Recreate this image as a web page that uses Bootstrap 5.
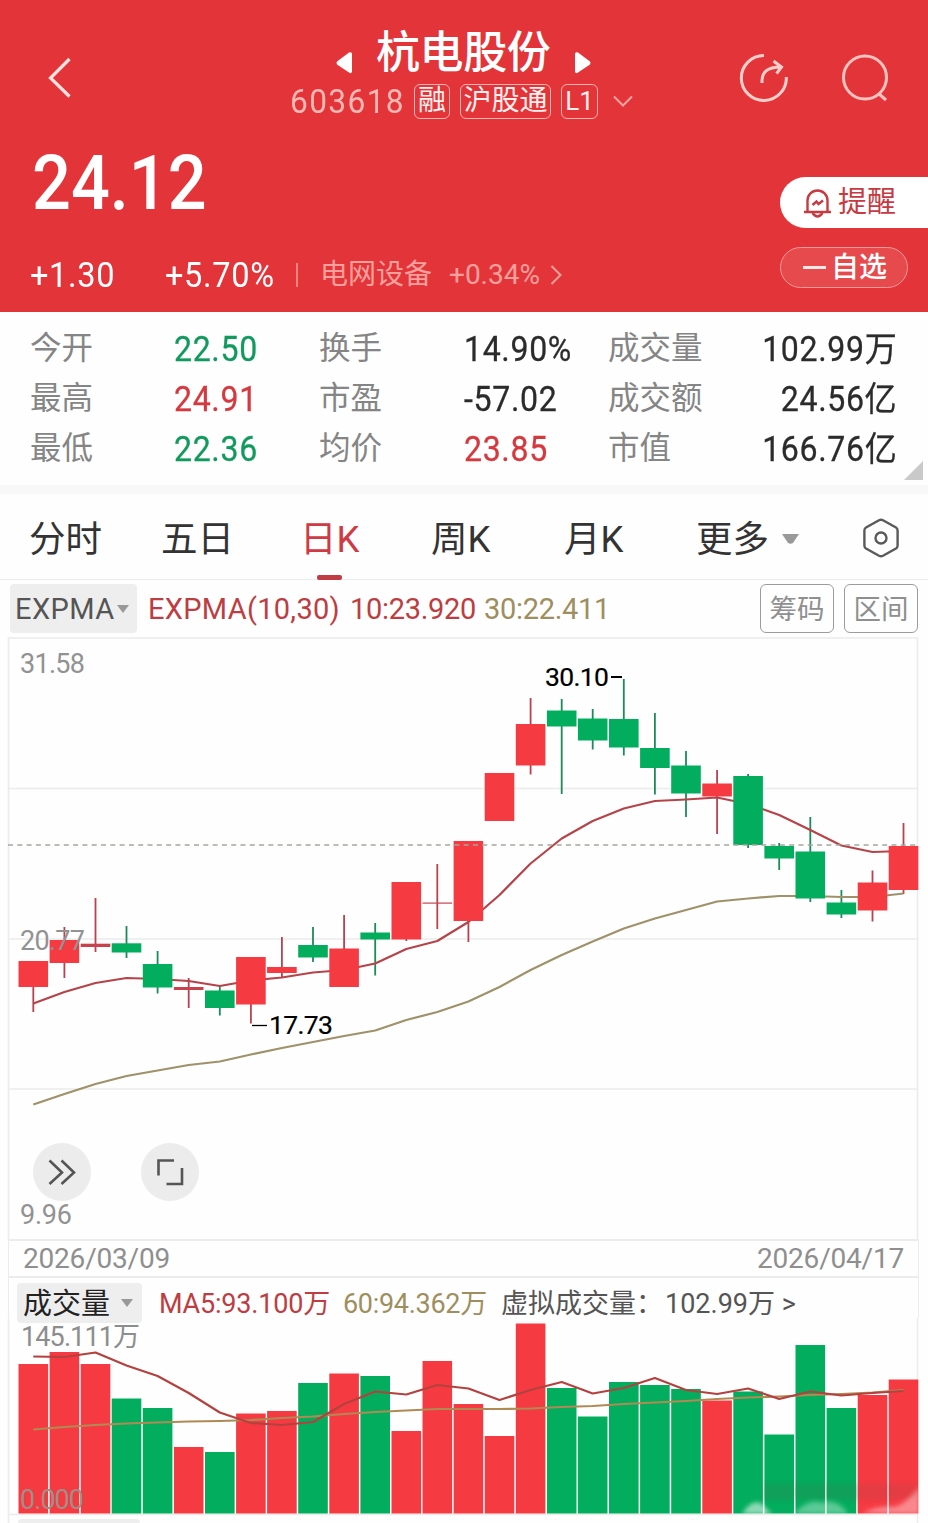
<!DOCTYPE html>
<html lang="zh-CN">
<head>
<meta charset="utf-8">
<meta name="viewport" content="width=device-width, initial-scale=1">
<title>杭电股份 603618</title>
<link href="https://cdn.jsdelivr.net/npm/bootstrap@5.3.0/dist/css/bootstrap.min.css" rel="stylesheet">
<style>
  body{font-family:Roboto,"Noto Sans CJK SC",sans-serif;background:#fefefe;color:#2b2b2b;width:928px;height:1523px;overflow:hidden;line-height:1}
  svg{display:block;flex:none}
  .t{white-space:nowrap;line-height:1;display:block}
  .hero{height:312px;background:#e33539;color:#fff}
  .hero-top{height:136px}
  .back{margin:56px 0 0 46px;width:229px}
  .ident{width:378px;padding-top:30px}
  .stock-name{font-size:44px;font-weight:500;line-height:44px;letter-spacing:-.4px}
  .ident-row{height:34px;margin-top:9px}
  .code-no{font-size:34px;width:124px;color:#fcb9b4;margin-left:15px}
  .code-no span,.price,.chg span,.val{display:inline-block;transform:scaleX(.93);transform-origin:0 50%}
  .code-no span{letter-spacing:1.5px}
  .tagbox{height:35px;border:1.5px solid #fbb3ae;border-radius:6px;font-size:28px;color:#fff0ee}
  .price{font-size:76px;font-weight:500;letter-spacing:0;margin-left:32px;height:76px;line-height:76px;transform:scaleX(.9)}
  .chg{font-size:35px}
  .chg span{letter-spacing:.7px}
  .sector{font-size:28px;color:#f9a09d}
  .remind{width:148px;height:51px;background:#fff;border-radius:26px 0 0 26px;color:#c63b41;font-size:29px;padding-left:24px}
  .watch{width:128px;height:41px;border:1.5px solid #f4999a;border-radius:21px;background:#e64a4d;font-size:28px;font-weight:500;padding-left:22px;margin-top:19px}
  .stats{height:173px;padding-top:12px}
  .stat-line{height:50px}
  .lab{font-size:31.5px;color:#858585}
  .val{font-size:34.5px;letter-spacing:.7px;-webkit-text-stroke:.3px currentColor}
  .val.ms-auto{transform-origin:100% 50%;margin-right:31px}
  .up{color:#d5393f}.dn{color:#129a5e}
  .band{height:9px;background:#f8f8f8}
  .tabs{height:86px;padding-top:3px;border-bottom:1.5px solid #ececec;font-size:36.5px;color:#333}
  .tabs .t{padding-top:4px}
  .tabs .on{color:#cf3a45}
  .on-bar{left:17px;bottom:-1px;width:25px;height:5px;border-radius:2px;background:#c23c46}
  .ind{height:57px;padding:4px 0 0 10px;font-size:29px}
  .ind .t{padding-top:2px}
  .chip{background:#eeeeef;border-radius:4px;color:#555}
  .obtn{width:74px;height:49px;border:1.5px solid #9c9c9c;border-radius:6px;color:#8f8f8f;font-size:27.5px;padding-top:2px}
  .ma-a{color:#bd3d42}.ma-b{color:#9f8e5e}
  .dates{height:39px;margin:0 9px 0 8px;border:solid #ececec;border-width:2px 1px;font-size:28px;color:#8f8f8f;padding:0 14px 0 14px;letter-spacing:-.2px}
  .volhead{height:40px;margin:0 9px 0 8px;border:solid #ececec;border-width:0 1px;font-size:27px}
  svg text{font-family:Roboto,"Noto Sans CJK SC",sans-serif}
</style>
</head>
<body>

<header class="hero">
  <div class="hero-top d-flex align-items-start">
    <svg class="back" height="44" viewBox="0 0 229 44" fill="none" stroke="#ffe3df" stroke-width="3.2"><path d="M23.500 3L4.500 22L23.500 40.500"/></svg>
    <div class="ident">
      <div class="d-flex align-items-center justify-content-start" style="padding-left:61px">
        <svg width="16" height="26" viewBox="0 0 16 26" class="mt-3" fill="#fff"><path d="M16 1.500V20Q15 22 13 20.500L1 12.500Q0 11 1 9.500L13 .5Q15 -.5 16 1.500Z" transform="translate(0 4)"/></svg>
        <span class="t stock-name" style="margin:0 25px 0 24px;padding-top:1px">杭电股份</span>
        <svg width="16" height="26" viewBox="0 0 16 26" class="mt-3" fill="#fff"><path d="M0 1.500V20Q1 22 3 20.500L15 12.500Q16 11 15 9.500L3 .5Q1 -.5 0 1.500Z" transform="translate(0 4)"/></svg>
      </div>
      <div class="ident-row d-flex align-items-center">
        <span class="t code-no"><span>603618</span></span>
        <span class="tagbox d-flex align-items-center justify-content-center" style="width:36px">融</span>
        <span class="tagbox d-flex align-items-center justify-content-center" style="width:91px;margin-left:10px">沪股通</span>
        <span class="tagbox d-flex align-items-center justify-content-center" style="width:37px;margin-left:10px;font-size:26px">L1</span>
        <svg width="20" height="12" viewBox="0 0 20 12" style="margin-left:15px" fill="none" stroke="#f5a5a2" stroke-width="2"><path d="M1 1.500L10 10.500L19 1.500"/></svg>
      </div>
    </div>
    <svg width="50" height="50" viewBox="0 0 50 50" style="margin:53px 0 0 85px" fill="none" stroke="#ffd0cb" stroke-width="3"><path d="M26 2.500A22.500 22.500 0 1 0 48.300 24"/><path d="M24 30C23.500 19 29 14 43 14M35.500 8L43.500 14L38.500 20.500"/></svg>
    <svg width="50" height="50" viewBox="0 0 50 50" style="margin:53px 0 0 51px" fill="none" stroke="#ffc3bf" stroke-width="3"><circle cx="26" cy="24.500" r="21.500"/><path d="M39.500 40.500L47 47"/></svg>
  </div>
  <div class="d-flex justify-content-between">
    <div>
      <div class="price t" style="margin-top:9px">24.12</div>
      <div class="d-flex align-items-center" style="height:40px;margin-top:34px">
        <span class="t chg" style="width:135px;margin-left:30px"><span>+1.30</span></span>
        <span class="t chg" style="width:131px"><span>+5.70%</span></span>
        <span style="width:2px;height:24px;background:#ee8283"></span>
        <span class="t sector" style="margin-left:22px;width:129px">电网设备</span>
        <span class="t sector" style="width:101px">+0.34%</span>
        <svg width="12" height="20" viewBox="0 0 12 20" fill="none" stroke="#f9a09d" stroke-width="2"><path d="M1.500 1L10.500 10L1.500 19"/></svg>
      </div>
    </div>
    <div class="d-flex flex-column" style="padding-top:41px">
      <div class="remind d-flex align-items-center">
        <svg width="28" height="30" viewBox="0 0 28 30" style="margin-right:6px" fill="none" stroke="#c63b41" stroke-width="2.400"><path d="M0 24H27M3.500 24V12.500A10 10 0 0 1 23.500 12.500V24"/><path d="M8.500 25Q13.500 32 18.500 25"/><path d="M8.500 17L12.500 13.500L14.500 16L19 12.500"/></svg>
        <span class="t">提醒</span>
      </div>
      <div class="watch d-flex align-items-center">
        <span style="width:23px;height:3px;background:#ffe9e6;margin-right:5px"></span><span class="t">自选</span>
      </div>
    </div>
  </div>
</header>

<section class="stats position-relative">
  <div class="stat-line d-flex align-items-center">
    <span class="t lab" style="margin-left:30px;width:144px">今开</span><span class="t val dn" style="width:145px">22.50</span>
    <span class="t lab" style="width:145px">换手</span><span class="t val" style="width:144px">14.90%</span>
    <span class="t lab">成交量</span><span class="t val ms-auto">102.99万</span>
  </div>
  <div class="stat-line d-flex align-items-center">
    <span class="t lab" style="margin-left:30px;width:144px">最高</span><span class="t val up" style="width:145px">24.91</span>
    <span class="t lab" style="width:145px">市盈</span><span class="t val" style="width:144px">-57.02</span>
    <span class="t lab">成交额</span><span class="t val ms-auto">24.56亿</span>
  </div>
  <div class="stat-line d-flex align-items-center">
    <span class="t lab" style="margin-left:30px;width:144px">最低</span><span class="t val dn" style="width:145px">22.36</span>
    <span class="t lab" style="width:145px">均价</span><span class="t val up" style="width:144px">23.85</span>
    <span class="t lab">市值</span><span class="t val ms-auto">166.76亿</span>
  </div>
  <svg class="position-absolute" style="right:5px;bottom:5px" width="19" height="19"><path d="M19 0V19H0Z" fill="#c9c9c9"/></svg>
</section>
<div class="band"></div>

<nav class="tabs d-flex align-items-center">
  <span class="t" style="margin-left:29px;width:132px">分时</span>
  <span class="t" style="width:139px">五日</span>
  <span class="on position-relative d-flex align-items-center h-100" style="width:131px"><span class="t">日K</span><span class="on-bar position-absolute"></span></span>
  <span class="t" style="width:133px">周K</span>
  <span class="t" style="width:132px">月K</span>
  <span class="t" style="width:86px">更多</span>
  <svg width="18" height="11"><path d="M0 1H17L11 10Q8.500 11.500 6 10Z" fill="#999"/></svg>
  <svg width="38" height="40" viewBox="0 0 38 40" style="margin-left:62px" fill="none" stroke="#5a5a5a" stroke-width="2.400"><path d="M17 2.200Q19 1.200 21 2.200L34 9.500Q35.600 10.500 35.600 12.500V27.500Q35.600 29.500 34 30.500L21 37.800Q19 38.800 17 37.800L4 30.500Q2.400 29.500 2.400 27.500V12.500Q2.400 10.500 4 9.500Z"/><circle cx="19" cy="20" r="5.500"/></svg>
</nav>

<div class="ind d-flex align-items-start">
  <div class="chip d-flex align-items-center" style="width:127px;height:49px;padding-left:5px"><span class="t" style="letter-spacing:.4px">EXPMA</span><svg width="12" height="8" style="margin-left:3px"><path d="M0 0H12L6 8Z" fill="#999"/></svg></div>
  <div class="d-flex align-items-center" style="height:49px;margin-left:11px">
    <span class="t ma-a" style="width:202px;letter-spacing:.3px">EXPMA(10,30)</span>
    <span class="t ma-a" style="width:134px;letter-spacing:-.3px">10:23.920</span>
    <span class="t ma-b" style="letter-spacing:-.3px">30:22.411</span>
  </div>
  <div class="d-flex ms-auto" style="gap:10px;margin-right:10px">
    <span class="obtn d-flex align-items-center justify-content-center">筹码</span>
    <span class="obtn d-flex align-items-center justify-content-center">区间</span>
  </div>
</div>

<svg id="kline" width="928" height="602" viewBox="0 637 928 602">
  <g fill="none" stroke="#ececec" stroke-width="1.600"><path d="M8.500 1239V638H917.500V1239"/><path d="M8 788.500H918M8 939H918M8 1089H918"/></g>
  <g id="wicks"></g>
  <g id="klines" fill="none" stroke-width="2.200" stroke-linejoin="round"></g>
  <g id="bodies"></g>
  <path d="M8 845H918" stroke="#a3a89c" stroke-width="1.500" stroke-dasharray="5 4.300"/>
  <g font-size="27" fill="#929292"><text x="20" y="672.500" textLength="65">31.58</text><text x="20" y="950" textLength="65">20.77</text><text x="20" y="1224" textLength="52">9.96</text></g>
  <g font-size="26.500" fill="#000" stroke="#000" stroke-width=".2"><text x="545" y="685.500" textLength="64">30.10</text><text x="269" y="1034" textLength="64">17.73</text></g>
  <path d="M611 677H622" stroke="#000" stroke-width="2"/><path d="M252 1025.500H267" stroke="#000" stroke-width="1.300"/>
  <circle cx="62" cy="1172" r="29" fill="#ececec"/><circle cx="170" cy="1172" r="29" fill="#ececec"/>
  <g fill="none" stroke="#555" stroke-width="2.600"><path d="M49.500 1160.500L62 1172.500L49.500 1184M61.500 1160.500L74 1172.500L61.500 1184"/><path d="M174 1160.500H158.500V1175.500M166.500 1184H182V1168"/></g>
</svg>

<div class="dates d-flex align-items-center justify-content-between">
  <span class="t">2026/03/09</span><span class="t">2026/04/17</span>
</div>
<div class="volhead d-flex align-items-start">
  <div class="chip d-flex align-items-center" style="width:125px;height:40px;margin:5px 0 0 8px;padding-left:6px"><span class="t" style="font-size:29px;color:#222;padding-top:2px">成交量</span><svg width="12" height="8" style="margin-left:11px"><path d="M0 0H12L6 8Z" fill="#999"/></svg></div>
  <div class="d-flex align-items-center" style="height:53px;margin-left:17px">
    <span class="t ma-a" style="width:184px;letter-spacing:-.2px">MA5:93.100万</span>
    <span class="t ma-b" style="width:158px;letter-spacing:-.3px">60:94.362万</span>
    <span class="t" style="width:164px;color:#555">虚拟成交量：</span>
    <span class="t" style="color:#555">102.99万 &gt;</span>
  </div>
</div>
<svg id="vol" class="position-relative" width="928" height="205" viewBox="0 1318 928 205">
  <defs>
    <filter id="soft" x="-10%" y="-50%" width="120%" height="200%"><feGaussianBlur stdDeviation="2"/></filter>
    <clipPath id="area"><rect x="740" y="1470" width="178" height="44"/></clipPath>
  </defs>
  <path d="M8.500 1318V1523M917.500 1318V1523M8 1514.500H918" stroke="#ececec" stroke-width="1.500"/>
  <g id="bars"></g>
  <g id="vlines" fill="none" stroke-width="2.200" stroke-linejoin="round"></g>
  <g clip-path="url(#area)"><g filter="url(#soft)" fill="#fff">
    <path d="M764 1484H918V1500H764Z" fill="#6b4a3a" opacity=".13"/>
    <path d="M742 1514Q752 1498 762 1504L772 1514Z" opacity=".55"/>
    <path d="M794 1514Q808 1498 822 1503Q838 1498 848 1514Z" opacity=".35"/>
    <path d="M862 1513Q880 1505 894 1507Q906 1504 919 1488V1514Z" opacity=".4"/>
  </g></g>
  <g font-size="27" fill="#8d8d8d"><text x="21" y="1345.500" textLength="119">145.111万</text><text x="20" y="1509" textLength="64" fill="#a08d88">0.000</text></g>
  <rect x="18" y="1519" width="122" height="10" rx="4" fill="#eeeeef"/>
</svg>

<script src="https://cdn.jsdelivr.net/npm/bootstrap@5.3.0/dist/js/bootstrap.bundle.min.js"></script>
<script>
  // one row per trading day: body top, body bottom, high, low, rising (1) or falling (0), volume top
  const days = [
    [961,987,961,1012,1,1364],[940,963,927,978,1,1352],[943.7,947,898,952,1,1364],[943.3,952.5,926,958,0,1398.5],
    [964,987.5,951,993.5,0,1408],[987,990,978,1008,1,1447],[990.5,1008,986,1015.5,0,1452],[957,1004.5,957,1023.5,1,1413.5],
    [967,973,937,978,1,1411],[945,957.5,927,962,0,1383],[948.5,987,915,987,1,1373.5],[932.5,939.5,923,975.5,0,1376],
    [882,939.5,882,941,1,1431],[902.5,903.7,864,929,1,1361],[841,921,841,942,1,1404],[773,821,773,821,1,1436],
    [724,765.5,698,774.5,1,1323.5],[710.5,726.5,699,794,0,1388],[718.5,740.5,709,749.5,0,1416.5],[719,747.5,679,755.5,0,1382],
    [748,768,713,794.5,0,1385],[765.5,793.5,751,817,0,1389],[783.5,796.5,770,834,1,1400.5],[776,845,774,848,0,1391.5],
    [846,858.5,843,870,0,1434.5],[851.5,898.5,817,902,0,1345],[902.5,914.5,890,918,0,1408],[882.5,910.5,870.5,921.5,1,1395],
    [846,890,823,894,1,1379.5]];
  const fast = [1003.5,992,983,978,979,981,986,980.5,977.5,972.5,970,963.5,949,941,922,895,863.5,838.5,821,808.5,801,799.5,797.5,804,815,830,845.5,852,851];
  const slow = [1104.5,1094,1084,1076,1070.5,1065,1061.5,1054.5,1048,1042,1036,1030.5,1020,1012,1001.5,987,970,955,941.5,928.5,918.5,910,901.5,898.5,896,896,897,897,893.5];
  const ma5 = [1356.5,1357,1352.5,1365.5,1376,1393,1412.5,1423,1425,1422,1404,1391.5,1394.5,1385,1388.5,1400,1390,1382,1393.5,1388,1378,1390,1394,1388.5,1399,1391.5,1395.5,1393,1391];
  const ma60 = [1429.5,1427,1425,1423.5,1422.5,1421.5,1421,1420,1418,1416.5,1414,1412,1410.5,1409,1409,1409,1408.5,1407,1406,1404,1402.5,1401,1399,1397.5,1396.5,1395,1394,1392.5,1390];
  const RED = '#f63a42', GREEN = '#02ad5d', X = i => 33.3 + 31.08 * i;
  const rect = (x, y, w, h, c) => `<rect x="${x.toFixed(1)}" y="${y}" width="${w}" height="${h}" fill="${c}"/>`;
  const line = (a, c) => `<polyline stroke="${c}" points="${a.map((y, i) => X(i).toFixed(1) + ',' + y).join(' ')}"/>`;
  const put = (id, html) => document.getElementById(id).innerHTML = html;
  put('wicks', days.map((d, i) => rect(X(i) - .9, d[2], 1.8, d[3] - d[2], d[4] ? '#b9424e' : '#1d8a5a')).join(''));
  put('bodies', days.map((d, i) => rect(X(i) - 14.8, d[0], 29.6, +(d[1] - d[0]).toFixed(1), d[1] - d[0] < 5 && d[4] ? '#c8424c' : d[4] ? RED : GREEN)).join(''));
  put('klines', line(slow, '#9f9169') + line(fast, '#b5444a'));
  put('bars', days.map((d, i) => rect(X(i) - 14.8, d[5], 29.6, 1513.5 - d[5], d[4] ? RED : GREEN)).join(''));
  put('vlines', line(ma60, '#b08a55') + line(ma5, '#b3423f'));
</script>
</body>
</html>
